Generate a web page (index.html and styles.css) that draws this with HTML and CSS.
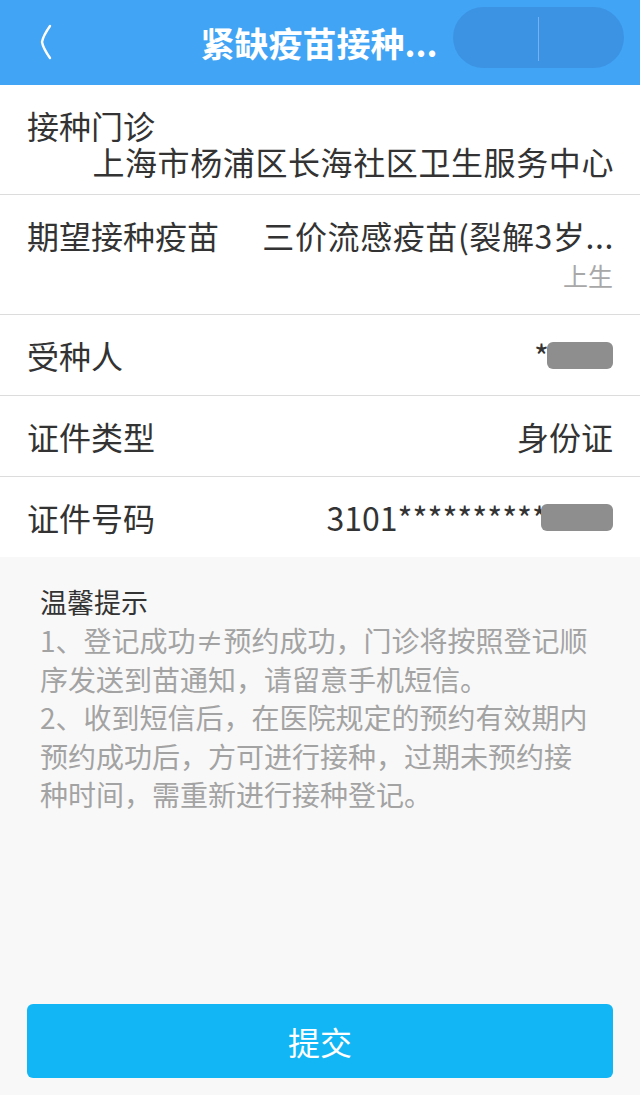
FILE: index.html
```html
<!DOCTYPE html>
<html lang="zh-CN">
<head>
    <meta charset="UTF-8">
    <meta name="viewport" content="width=device-width, initial-scale=1.0">
    <title>紧缺疫苗接种登记</title>
    <link rel="stylesheet" href="styles.css">
</head>
<body>
    <div class="page">
        <div class="header">
            <svg class="back" width="14" height="36" viewBox="0 0 14 36">
                <path d="M11 2 Q4 12 3 18 Q4 24 11 34" fill="none" stroke="#ffffff" stroke-width="2.4" stroke-linecap="round"/>
            </svg>
            <div class="title">紧缺疫苗接种...</div>
            <div class="capsule"><span class="capsule-line"></span></div>
        </div>

        <div class="form">
            <div class="row row-clinic">
                <div class="label">接种门诊</div>
                <div class="value">上海市杨浦区长海社区卫生服务中心</div>
            </div>
            <div class="row row-vaccine">
                <div class="line">
                    <div class="label">期望接种疫苗</div>
                    <div class="value">三价流感疫苗(裂解3岁...</div>
                </div>
                <div class="sub">上生</div>
            </div>
            <div class="row row-simple">
                <div class="label">受种人</div>
                <div class="value">*<span class="mask mask-name"></span></div>
            </div>
            <div class="row row-simple">
                <div class="label">证件类型</div>
                <div class="value">身份证</div>
            </div>
            <div class="row row-simple last">
                <div class="label">证件号码</div>
                <div class="value">3101**********<span class="mask mask-id"></span></div>
            </div>
        </div>

        <div class="tips">
            <div class="tips-title">温馨提示</div>
            <p class="tips-text">1、登记成功≠预约成功，门诊将按照登记顺序发送到苗通知，请留意手机短信。</p>
            <p class="tips-text">2、收到短信后，在医院规定的预约有效期内预约成功后，方可进行接种，过期未预约接种时间，需重新进行接种登记。</p>
        </div>

        <div class="footer">
            <button class="submit">提交</button>
        </div>
    </div>
</body>
</html>
```

FILE: styles.css
```css
body {
    margin: 0;
    font-family: "Noto Sans CJK SC", "Noto Sans", sans-serif;
    background: #f8f8f8;
    color: #333333;
}
.page {
    display: flex;
    flex-direction: column;
    height: 1095px;
    width: 640px;
}
.header {
    position: relative;
    height: 85px;
    background: #42a4f5;
    display: flex;
    align-items: center;
    justify-content: center;
    flex-shrink: 0;
}
.back {
    position: absolute;
    left: 39px;
    top: 24px;
}
.title {
    color: #ffffff;
    font-size: 34px;
    font-weight: bold;
    margin-left: -2px;
}
.capsule {
    position: absolute;
    left: 453px;
    top: 7px;
    width: 171px;
    height: 61px;
    border-radius: 31px;
    background: #3c93e4;
}
.capsule-line {
    position: absolute;
    left: 85px;
    top: 10px;
    width: 1px;
    height: 44px;
    background: #76b3ee;
}
.form {
    background: #ffffff;
    flex-shrink: 0;
}
.row {
    border-bottom: 1px solid #dcdcdc;
    padding: 0 27px;
    font-size: 32px;
}
.row.last {
    border-bottom: none;
}
.row-clinic {
    height: 110px;
    padding-top: 23px;
    box-sizing: border-box;
}
.row-clinic .label {
    line-height: 34px;
}
.row-clinic .value {
    line-height: 38px;
    text-align: right;
    letter-spacing: 0.6px;
    margin-right: -1px;
}
.row-vaccine {
    height: 120px;
    padding-top: 21px;
    box-sizing: border-box;
}
.row-vaccine .line {
    display: flex;
    justify-content: space-between;
    line-height: 38px;
}
.row-vaccine .value {
    letter-spacing: 0.6px;
    margin-right: -1px;
}
.row-vaccine .sub {
    text-align: right;
    color: #a8a8a8;
    font-size: 25px;
    line-height: 30px;
    margin-top: 6px;
}
.row-simple {
    height: 80px;
    display: flex;
    align-items: center;
    justify-content: space-between;
}
.row-simple .value {
    display: flex;
    align-items: center;
}
.mask {
    display: inline-block;
    height: 27px;
    background: #8e8e8e;
    border-radius: 6px;
}
.mask-name {
    width: 66px;
    margin-left: -2px;
}
.mask-id {
    width: 72px;
    margin-left: -6px;
}
.tips {
    flex: 1;
    padding: 26px 48px 0 40px;
}
.tips-title {
    font-size: 27px;
    line-height: 38px;
    color: #333333;
}
.tips-text {
    margin: 0;
    font-size: 28px;
    line-height: 38.5px;
    color: #a3a3a3;
}
.footer {
    padding: 0 27px 17px;
}
.submit {
    width: 100%;
    height: 74px;
    border: none;
    border-radius: 6px;
    background: #13b6f5;
    color: #ffffff;
    font-family: "Noto Sans CJK SC", sans-serif;
    font-size: 32px;
}
```
